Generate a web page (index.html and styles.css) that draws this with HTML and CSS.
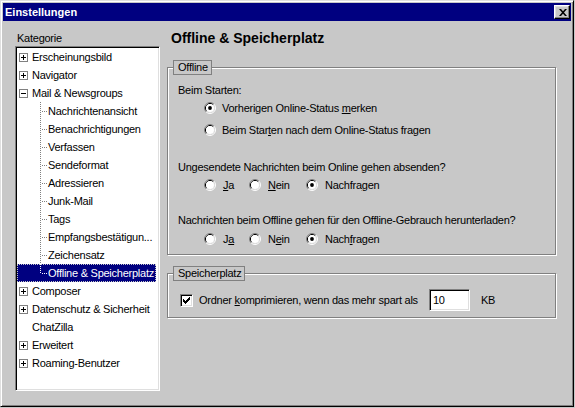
FILE: index.html
```html
<!DOCTYPE html>
<html lang="de">
<head>
<meta charset="utf-8">
<title>Einstellungen</title>
<link rel="stylesheet" href="styles.css">
</head>
<body>
<svg class="defs" width="0" height="0" aria-hidden="true">
  <defs>
    <symbol id="plus" viewBox="0 0 9 9">
      <rect x="0.5" y="0.5" width="8" height="8" fill="#fff" stroke="#808080"/>
      <path d="M2 4.5H7M4.5 2V7" stroke="#000" stroke-width="1"/>
    </symbol>
    <symbol id="minus" viewBox="0 0 9 9">
      <rect x="0.5" y="0.5" width="8" height="8" fill="#fff" stroke="#808080"/>
      <path d="M2 4.5H7" stroke="#000" stroke-width="1"/>
    </symbol>
    <symbol id="radio" viewBox="0 0 12 12">
      <path d="M2.11 9.89A5.5 5.5 0 0 1 9.89 2.11" fill="none" stroke="#808080"/>
      <path d="M9.89 2.11A5.5 5.5 0 0 1 2.11 9.89" fill="none" stroke="#fff"/>
      <path d="M2.82 9.18A4.5 4.5 0 0 1 9.18 2.82" fill="none" stroke="#000"/>
      <path d="M9.18 2.82A4.5 4.5 0 0 1 2.82 9.18" fill="none" stroke="#dfdfdf"/>
      <circle cx="6" cy="6" r="4" fill="#fff"/>
    </symbol>
    <symbol id="radio-on" viewBox="0 0 12 12">
      <use href="#radio"/>
      <circle cx="6" cy="6" r="1.9" fill="#000"/>
    </symbol>
  </defs>
</svg>
<div class="window">
  <div class="titlebar">
    <span class="title">Einstellungen</span>
    <span class="close">
      <svg width="8" height="7" viewBox="0 0 8 7"><path d="M0 0h2l2 2.3L6 0h2L5 3.5 8 7H6L4 4.7 2 7H0l3-3.5z" fill="#000"/></svg>
    </span>
  </div>
  <div class="body">
    <div class="left">
      <div class="label">Kategorie</div>
      <div class="tree">
        <div class="row top"><svg class="exp"><use href="#plus"/></svg><span>Erscheinungsbild</span></div>
        <div class="row top"><svg class="exp"><use href="#plus"/></svg><span>Navigator</span></div>
        <div class="row top"><svg class="exp"><use href="#minus"/></svg><span>Mail &amp; Newsgroups</span></div>
        <div class="row child"><span>Nachrichtenansicht</span></div>
        <div class="row child"><span>Benachrichtigungen</span></div>
        <div class="row child"><span>Verfassen</span></div>
        <div class="row child"><span>Sendeformat</span></div>
        <div class="row child"><span>Adressieren</span></div>
        <div class="row child"><span>Junk-Mail</span></div>
        <div class="row child"><span>Tags</span></div>
        <div class="row child"><span>Empfangsbestätigun...</span></div>
        <div class="row child"><span>Zeichensatz</span></div>
        <div class="row child last selected"><span>Offline &amp; Speicherplatz</span></div>
        <div class="row top"><svg class="exp"><use href="#plus"/></svg><span>Composer</span></div>
        <div class="row top"><svg class="exp"><use href="#plus"/></svg><span>Datenschutz &amp; Sicherheit</span></div>
        <div class="row noexp"><span>ChatZilla</span></div>
        <div class="row top"><svg class="exp"><use href="#plus"/></svg><span>Erweitert</span></div>
        <div class="row top"><svg class="exp"><use href="#plus"/></svg><span>Roaming-Benutzer</span></div>
      </div>
    </div>
    <div class="right">
      <div class="heading">Offline &amp; Speicherplatz</div>

      <div class="group offline">
        <div class="caption">Offline</div>
        <div class="line q1">Beim Starten:</div>
        <div class="vradios">
          <div class="opt o1"><svg class="radio"><use href="#radio-on"/></svg><span>Vorherigen Online-Status <u>m</u>erken</span></div>
          <div class="opt o2"><svg class="radio"><use href="#radio"/></svg><span>Beim Star<u>t</u>en nach dem Online-Status fragen</span></div>
        </div>
        <div class="line q2">Ungesendete Nachrichten beim Online gehen absenden?</div>
        <div class="hradios h1">
          <div class="opt"><svg class="radio"><use href="#radio"/></svg><span><u>J</u>a</span></div>
          <div class="opt"><svg class="radio"><use href="#radio"/></svg><span><u>N</u>ein</span></div>
          <div class="opt"><svg class="radio"><use href="#radio-on"/></svg><span>Nachfra<u>g</u>en</span></div>
        </div>
        <div class="line q3">Nachrichten beim Offline gehen für den Offline-Gebrauch herunterladen?</div>
        <div class="hradios h2">
          <div class="opt"><svg class="radio"><use href="#radio"/></svg><span>J<u>a</u></span></div>
          <div class="opt"><svg class="radio"><use href="#radio"/></svg><span>N<u>e</u>in</span></div>
          <div class="opt"><svg class="radio"><use href="#radio-on"/></svg><span>Nach<u>f</u>ragen</span></div>
        </div>
      </div>

      <div class="group storage">
        <div class="caption">Speicherplatz</div>
        <div class="check-row">
          <span class="checkbox">
            <svg width="7" height="7" viewBox="0 0 7 7" shape-rendering="crispEdges"><path d="M6 0h1v1H6zM5 1h2v1H5zM0 2h1v1H0zM4 2h3v1H4zM0 3h2v1H0zM3 3h3v1H3zM0 4h5v1H0zM1 5h3v1H1zM2 6h1v1H2z" fill="#000"/></svg>
          </span>
          <span>Ordner <u>k</u>omprimieren, wenn das mehr spart als</span>
          <span class="field">10</span>
          <span class="unit">KB</span>
        </div>
      </div>
    </div>
  </div>
</div>
</body>
</html>
```

FILE: styles.css
```css
* {
  box-sizing: border-box;
}

body {
  margin: 0;
  background: #c8c8c8;
  font-family: "Liberation Sans", Arial, sans-serif;
  font-size: 11px;
  letter-spacing: -0.25px;
  color: #000;
}

u {
  text-decoration: underline;
  text-underline-offset: 1px;
}

.defs {
  display: block;
  width: 0;
  height: 0;
  overflow: hidden;
}

.window {
  width: 574px;
  height: 407px;
  border: 1px solid;
  border-color: #dfdfdf #000 #000 #dfdfdf;
  box-shadow: inset 1px 1px #fff, inset -1px -1px #808080;
  padding: 2px;
  background: #c8c8c8;
  display: flex;
  flex-direction: column;
}

.titlebar {
  height: 18px;
  flex: none;
  background: #000080;
  display: flex;
  align-items: center;
  justify-content: space-between;
  padding: 0 1px 0 2px;
}

.title {
  color: #fff;
  font-weight: bold;
  letter-spacing: 0;
  line-height: 18px;
}

.close {
  width: 16px;
  height: 14px;
  background: #c8c8c8;
  border: 1px solid;
  border-color: #fff #000 #000 #fff;
  box-shadow: inset -1px -1px #808080, inset 1px 1px #dfdfdf;
  display: flex;
  align-items: center;
  justify-content: center;
}

.close svg {
  display: block;
  margin-left: 1px;
}

.body {
  display: flex;
  flex: 1;
}

.left {
  margin-left: 12px;
  padding-top: 11px;
  width: 145px;
  display: flex;
  flex-direction: column;
}

.label {
  padding-left: 2px;
  height: 13px;
  line-height: 13px;
}

.tree {
  margin-top: 1px;
  height: 345px;
  background: #fff;
  border: 1px solid;
  border-color: #808080 #fff #fff #808080;
  box-shadow: inset 1px 1px #000, inset -1px -1px #dfdfdf;
  padding: 1px;
  display: flex;
  flex-direction: column;
}

.row {
  height: 18px;
  flex: none;
  display: flex;
  align-items: center;
  position: relative;
  white-space: nowrap;
  margin-right: 2px;
}

.row.top {
  padding-left: 2px;
}

.row.noexp {
  padding-left: 15px;
}

.exp {
  width: 9px;
  height: 9px;
  margin-right: 4px;
  flex: none;
  display: block;
}

.row.child {
  padding-left: 31px;
}

.row.child::before {
  content: "";
  position: absolute;
  left: 23px;
  top: 0;
  bottom: 0;
  width: 1px;
  background: repeating-linear-gradient(to bottom, #808080 0 1px, transparent 1px 2px);
}

.row.child.last::before {
  bottom: 9px;
}

.row.child::after {
  content: "";
  position: absolute;
  left: 24px;
  top: 9px;
  width: 6px;
  height: 1px;
  background: repeating-linear-gradient(to right, transparent 0 1px, #808080 1px 2px);
}

.row.selected {
  background: #000080;
  color: #fff;
  outline: 1px dotted #c8c8c8;
  outline-offset: -1px;
}

.row.selected::before {
  background: repeating-linear-gradient(to bottom, #fff 0 1px, transparent 1px 2px);
}

.row.selected::after {
  background: repeating-linear-gradient(to right, transparent 0 1px, #fff 1px 2px);
}

.right {
  margin-left: 7px;
  width: 389px;
  padding-top: 9px;
}

.heading {
  font-weight: bold;
  font-size: 14px;
  letter-spacing: 0;
  line-height: 16px;
  height: 16px;
  padding-left: 4px;
}

.group {
  border: 1px solid #808080;
  box-shadow: inset 1px 1px #fff, 1px 1px #fff;
}

.group.offline {
  margin-top: 21px;
  padding: 0 0 8px 10px;
}

.group.storage {
  margin-top: 18px;
  padding: 0 0 6px 0;
}

.caption {
  width: fit-content;
  height: 15px;
  margin-top: -8px;
  margin-left: 5px;
  border: 1px solid #808080;
  background: #c8c8c8;
  padding: 0 3px 0 4px;
  line-height: 13px;
}

.group.offline .caption {
  margin-left: -5px;
}

.line {
  height: 14px;
  line-height: 14px;
}

.q1 {
  margin-top: 8px;
}

.q2 {
  margin-top: 23px;
}

.q3 {
  margin-top: 21px;
}

.vradios {
  padding-left: 26px;
}

.opt {
  display: flex;
  align-items: center;
  gap: 6px;
  height: 14px;
  line-height: 14px;
  white-space: nowrap;
}

.o1 {
  margin-top: 4px;
}

.o2 {
  margin-top: 8px;
}

.radio {
  width: 12px;
  height: 12px;
  flex: none;
  display: block;
}

.hradios {
  display: grid;
  grid-template-columns: 45px 57px auto;
  padding-left: 26px;
}

.hradios .opt {
  gap: 7px;
}

.h1 {
  margin-top: 4px;
}

.h2 {
  margin-top: 5px;
}

.check-row {
  display: flex;
  align-items: center;
  height: 22px;
  margin-top: 8px;
  padding-left: 12px;
  white-space: nowrap;
}

.checkbox {
  width: 13px;
  height: 13px;
  flex: none;
  margin-right: 6px;
  background: #fff;
  border: 1px solid;
  border-color: #808080 #fff #fff #808080;
  box-shadow: inset 1px 1px #000, inset -1px -1px #dfdfdf;
  display: flex;
  align-items: center;
  justify-content: center;
}

.checkbox svg {
  display: block;
}

.field {
  margin-left: 11px;
  width: 41px;
  height: 22px;
  flex: none;
  background: #fff;
  border: 1px solid;
  border-color: #808080 #fff #fff #808080;
  box-shadow: inset 1px 1px #000, inset -1px -1px #dfdfdf;
  padding-left: 3px;
  line-height: 20px;
}

.unit {
  margin-left: 11px;
}
```
